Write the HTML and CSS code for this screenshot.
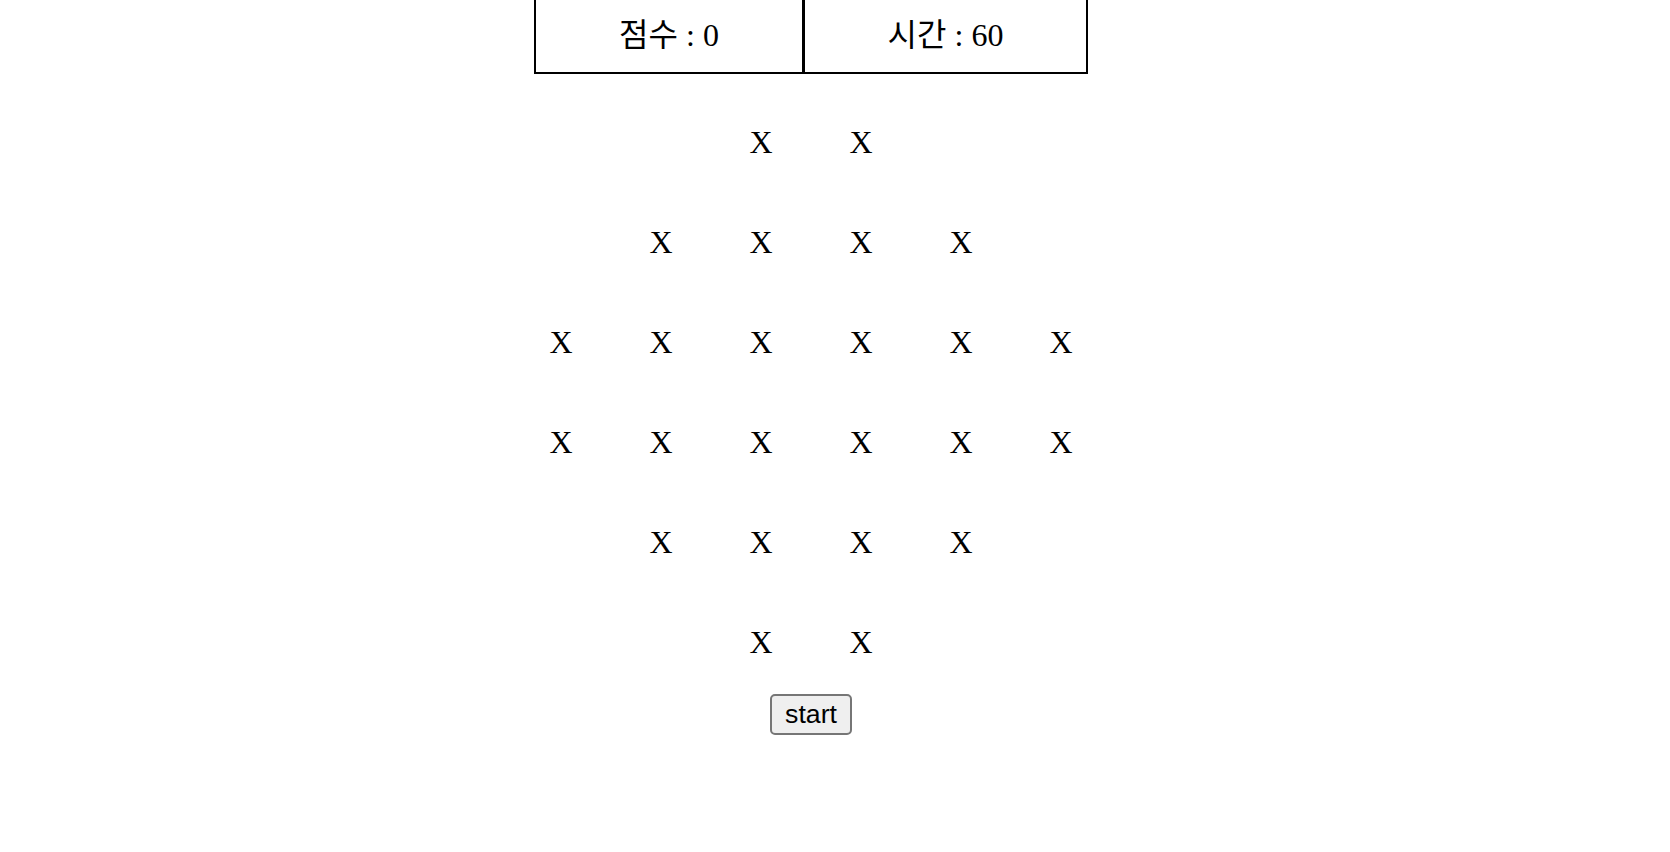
FILE: index.html
```html
<!DOCTYPE html>
<html lang="ko">
<head>
    <meta charset="UTF-8">
    <title>두더지 잡기</title>
    <link rel="stylesheet" href="styles.css">
</head>
<body>
    <div class="game">
        <!-- Score / Timer -->
        <div class="board-head">
            <div class="head-box score">점수 : <span id="score">0</span></div>
            <div class="head-box timer">시간 : <span id="time">60</span></div>
        </div>

        <!-- Holes -->
        <div class="field">
            <div class="hole"></div><div class="hole"></div><div class="hole">X</div><div class="hole">X</div><div class="hole"></div><div class="hole"></div>
            <div class="hole"></div><div class="hole">X</div><div class="hole">X</div><div class="hole">X</div><div class="hole">X</div><div class="hole"></div>
            <div class="hole">X</div><div class="hole">X</div><div class="hole">X</div><div class="hole">X</div><div class="hole">X</div><div class="hole">X</div>
            <div class="hole">X</div><div class="hole">X</div><div class="hole">X</div><div class="hole">X</div><div class="hole">X</div><div class="hole">X</div>
            <div class="hole"></div><div class="hole">X</div><div class="hole">X</div><div class="hole">X</div><div class="hole">X</div><div class="hole"></div>
            <div class="hole"></div><div class="hole"></div><div class="hole">X</div><div class="hole">X</div><div class="hole"></div><div class="hole"></div>
        </div>

        <button class="start-btn" id="start">start</button>
    </div>
</body>
</html>
```

FILE: styles.css
```css
/* General */
body {
    margin: 0;
    font-family: "Liberation Serif", "Noto Sans CJK KR", serif;
    color: #000000;
    background-color: #ffffff;
}

.game {
    width: 1622px;
    display: flex;
    flex-direction: column;
    align-items: center;
}

/* Score / Timer */
.board-head {
    display: flex;
}

.head-box {
    box-sizing: border-box;
    padding: 15px 0 17px;
    font-size: 32px;
    line-height: 40px;
    text-align: center;
    border-bottom: 2px solid #000000;
}

.score {
    width: 270px;
    border-left: 2px solid #000000;
    border-right: 2px solid #000000;
}

.timer {
    width: 284px;
    border-left: 1px solid #000000;
    border-right: 2px solid #000000;
}

/* Holes */
.field {
    display: grid;
    grid-template-columns: repeat(6, 100px);
    grid-auto-rows: 100px;
    margin-top: 18px;
}

.hole {
    display: flex;
    align-items: center;
    justify-content: center;
    font-size: 32px;
    line-height: 36px;
}

/* Start button */
.start-btn {
    margin-top: 2px;
    padding: 3px 13px;
    font-family: "Liberation Sans", Arial, sans-serif;
    font-size: 26.67px;
    color: #000000;
    background-color: #efefef;
    border: 2px solid #767676;
    border-radius: 5px;
    cursor: pointer;
}
```
